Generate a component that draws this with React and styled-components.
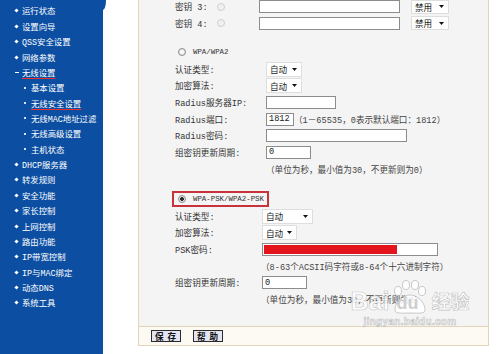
import React from 'react';
import styled, { createGlobalStyle } from 'styled-components';

const GlobalStyle = createGlobalStyle`
  html, body {
    margin: 0;
    padding: 0;
    background: #fff;
  }
  body {
    font-family: "Liberation Mono", "Noto Sans CJK SC", monospace;
    font-size: 8.6px;
    color: #333;
  }
`;

const Page = styled.div`
  position: relative;
  display: flex;
  width: 500px;
  height: 354px;
  overflow: hidden;
  background: #fff;
`;

const Sidebar = styled.nav`
  position: relative;
  flex: none;
  width: 103px;
  padding-top: 3.3px;
  box-sizing: border-box;
  background: #0b4ea2;
  &::after {
    content: '';
    position: absolute;
    left: 100%;
    top: 0;
    width: 3px;
    height: 10px;
    background: #0b4ea2;
    border-bottom-right-radius: 100% 100%;
  }
`;

const Menu = styled.ul`
  list-style: none;
  margin: 0;
  padding: 0;
`;

const MenuItem = styled.li`
  display: flex;
  align-items: center;
  height: 15.37px;
  padding-left: ${p => (p.$sub ? 24 : 15)}px;
  color: #fff;
  white-space: nowrap;
  font-family: "Noto Sans CJK SC", sans-serif;
  font-size: 8.4px;
`;

const Bullet = styled.span`
  flex: none;
  width: ${p => (p.$open ? 4 : p.$sub ? 2 : 3)}px;
  height: ${p => (p.$open ? 1.5 : p.$sub ? 2 : 3)}px;
  margin-right: ${p => (p.$open ? 3 : p.$sub ? 5 : 4)}px;
  background: ${p => (p.$sub ? '#d6e4ff' : '#fff')};
  transform: ${p => (p.$open || p.$sub ? 'none' : 'rotate(45deg)')};
`;

const MenuText = styled.span`
  font-family: "Liberation Mono", "Noto Sans CJK SC", sans-serif;
  text-decoration: ${p => (p.$active ? 'underline' : 'none')};
  text-decoration-color: #e8312f;
  text-decoration-thickness: 1px;
  text-underline-offset: 2px;
`;

const Gap = styled.div`
  flex: none;
  width: 35px;
`;

const Main = styled.div`
  flex: none;
  width: 351px;
  display: flex;
  flex-direction: column;
`;

const Panel = styled.div`
  height: 326px;
  box-sizing: border-box;
  overflow: hidden;
  padding-left: 36px;
  background: #f4f4f4;
  border-left: 1px solid #e3d6b8;
  border-right: 1px solid #e3d6b8;
`;

const Section = styled.div`
  display: flex;
  flex-direction: column;
  margin-top: ${p => p.$mt || 0}px;
`;

const Row = styled.div`
  display: flex;
  align-items: center;
  height: 16.67px;
  white-space: nowrap;
`;

const Label = styled.span`
  flex: none;
  width: ${p => p.$w}px;
  color: #333;
`;

const Note = styled.span`
  margin-left: ${p => p.$ml || 0}px;
  color: #444;
`;

const TextInput = styled.input`
  flex: none;
  width: ${p => p.$w}px;
  height: ${p => p.$h || 13}px;
  margin: 0;
  padding: 0 2px;
  box-sizing: border-box;
  border: 1px solid #8c8c8c;
  background: #fff;
  font: inherit;
  color: #222;
  outline: none;
`;

const SelectBox = styled.div`
  flex: none;
  display: flex;
  align-items: center;
  justify-content: space-between;
  width: ${p => p.$w}px;
  height: ${p => p.$h || 15}px;
  margin-left: ${p => p.$ml || 0}px;
  padding: 0 4px 0 3px;
  box-sizing: border-box;
  background: #fff;
  border: 1px solid #dedede;
  color: #222;
  font-family: "Noto Sans CJK SC", sans-serif;
`;

const Radio = styled.span`
  flex: none;
  width: 8px;
  height: 8px;
  margin-right: ${p => p.$mr || 0}px;
  box-sizing: border-box;
  border-radius: 50%;
  border: 1px solid ${p => (p.$disabled ? '#cfcfcf' : '#8e8e8e')};
  background: ${p =>
    p.$checked
      ? 'radial-gradient(circle, #2e2e2e 0 1.6px, #e9e9e9 2.2px)'
      : p.$disabled
      ? '#f0f0f0'
      : 'radial-gradient(circle, #fafafa 0 1.5px, #dcdcdc 3px)'};
`;

const ModeRow = styled(Row)`
  padding-left: 3px;
`;

const ModeFrame = styled.div`
  display: flex;
  align-items: center;
  width: 97px;
  height: 16px;
  margin-left: -6px;
  padding-left: 4px;
  box-sizing: border-box;
  border: 2px solid #c8323a;
`;

const ModeText = styled.span`
  font-family: "Liberation Mono", monospace;
  font-size: 7.4px;
  color: #333;
`;

const Masked = styled.div`
  height: 100%;
  width: 133px;
  background: #e3141c;
`;

const PskField = styled.div`
  flex: none;
  width: 176px;
  height: 13px;
  padding: 1px;
  box-sizing: border-box;
  border: 1px solid #8c8c8c;
  background: #fff;
`;

const ButtonBar = styled.div`
  display: flex;
  align-items: center;
  gap: 12px;
  height: 20px;
  padding-left: 12px;
  box-sizing: border-box;
  background: #fcfaf3;
  border: 1px solid #e3d6b8;
`;

const Button = styled.button`
  width: 30px;
  height: 12px;
  padding: 0;
  border: 1px solid #2b2b2b;
  background: #e4e4f2;
  color: #111;
  font-family: "Noto Sans CJK SC", sans-serif;
  font-size: 8.6px;
  font-weight: 700;
  line-height: 10px;
  letter-spacing: 1px;
`;

const Watermark = styled.div`
  position: absolute;
  left: 350px;
  top: 280px;
  width: 120px;
  display: flex;
  flex-direction: column;
  align-items: center;
  pointer-events: none;
  color: rgba(255, 255, 255, 0.85);
  -webkit-text-stroke: 0.6px rgba(140, 140, 140, 0.55);
`;

const MarkLine = styled.div`
  display: flex;
  align-items: flex-end;
  gap: 2px;
`;

const MarkLatin = styled.span`
  font-family: "Liberation Sans", sans-serif;
  font-weight: 700;
  font-size: 25px;
  line-height: 26px;
`;

const Paw = styled.span`
  position: relative;
  display: inline-block;
  width: 38px;
  height: 34px;
`;

const PawText = styled.span`
  position: absolute;
  left: 5px;
  bottom: 2px;
  font-family: "Liberation Sans", sans-serif;
  font-weight: 700;
  font-size: 18px;
  line-height: 18px;
  color: rgba(200, 200, 200, 0.9);
  -webkit-text-stroke: 0;
`;

const MarkCjk = styled.span`
  font-family: "Noto Sans CJK SC", sans-serif;
  font-weight: 700;
  font-size: 19px;
  line-height: 26px;
`;

const MarkUrl = styled.span`
  margin-top: 2px;
  font-family: "Liberation Sans", sans-serif;
  font-weight: 700;
  font-size: 10px;
  letter-spacing: 0.3px;
  color: rgba(255, 255, 255, 0.7);
`;

function Caret() {
  return (
    <svg width="5" height="3" viewBox="0 0 5 3">
      <polygon points="0,0 5,0 2.5,3" fill="#111" />
    </svg>
  );
}

function Dropdown({ value, ...rest }) {
  return (
    <SelectBox {...rest}>
      <span>{value}</span>
      <Caret />
    </SelectBox>
  );
}

const menu = [
  { text: '运行状态' },
  { text: '设置向导' },
  { text: 'QSS安全设置' },
  { text: '网络参数' },
  { text: '无线设置', open: true, active: true },
  { text: '基本设置', sub: true },
  { text: '无线安全设置', sub: true, active: true },
  { text: '无线MAC地址过滤', sub: true },
  { text: '无线高级设置', sub: true },
  { text: '主机状态', sub: true },
  { text: 'DHCP服务器' },
  { text: '转发规则' },
  { text: '安全功能' },
  { text: '家长控制' },
  { text: '上网控制' },
  { text: '路由功能' },
  { text: 'IP带宽控制' },
  { text: 'IP与MAC绑定' },
  { text: '动态DNS' },
  { text: '系统工具' },
];

export default function App() {
  return (
    <Page>
      <GlobalStyle />
      <Sidebar>
        <Menu>
          {menu.map(item => (
            <MenuItem key={item.text} $sub={item.sub}>
              <Bullet $sub={item.sub} $open={item.open} />
              <MenuText $active={item.active}>{item.text}</MenuText>
            </MenuItem>
          ))}
        </Menu>
      </Sidebar>
      <Gap />
      <Main>
        <Panel>
          <Section $mt={-1.5}>
            <Row>
              <Label $w={42}>密钥 3:</Label>
              <Radio $disabled $mr={34} />
              <TextInput $w={141} readOnly value="" />
              <Dropdown value="禁用" $w={38} $h={14} $ml={11} />
            </Row>
            <Row>
              <Label $w={42}>密钥 4:</Label>
              <Radio $disabled $mr={34} />
              <TextInput $w={141} readOnly value="" />
              <Dropdown value="禁用" $w={38} $h={14} $ml={11} />
            </Row>
          </Section>

          <Section $mt={12.3}>
            <ModeRow>
              <Radio $mr={7} />
              <ModeText>WPA/WPA2</ModeText>
            </ModeRow>
            <Row>
              <Label $w={91}>认证类型:</Label>
              <Dropdown value="自动" $w={36} />
            </Row>
            <Row>
              <Label $w={91}>加密算法:</Label>
              <Dropdown value="自动" $w={36} />
            </Row>
            <Row>
              <Label $w={91}>Radius服务器IP:</Label>
              <TextInput $w={70} readOnly value="" />
            </Row>
            <Row>
              <Label $w={91}>Radius端口:</Label>
              <TextInput $w={28} readOnly value="1812" />
              <Note>（1－65535，0表示默认端口：1812）</Note>
            </Row>
            <Row>
              <Label $w={91}>Radius密码:</Label>
              <TextInput $w={141} readOnly value="" />
            </Row>
            <Row>
              <Label $w={91}>组密钥更新周期:</Label>
              <TextInput $w={45} readOnly value="0" />
            </Row>
            <Row>
              <Note $ml={91}>（单位为秒，最小值为30，不更新则为0）</Note>
            </Row>
          </Section>

          <Section $mt={13.7}>
            <ModeRow>
              <ModeFrame>
                <Radio $checked $mr={7} />
                <ModeText>WPA-PSK/WPA2-PSK</ModeText>
              </ModeFrame>
            </ModeRow>
            <Row>
              <Label $w={87}>认证类型:</Label>
              <Dropdown value="自动" $w={51} />
            </Row>
            <Row>
              <Label $w={87}>加密算法:</Label>
              <Dropdown value="自动" $w={35} />
            </Row>
            <Row>
              <Label $w={87}>PSK密码:</Label>
              <PskField>
                <Masked />
              </PskField>
            </Row>
            <Row>
              <Note $ml={86}>（8-63个ACSII码字符或8-64个十六进制字符）</Note>
            </Row>
            <Row>
              <Label $w={87}>组密钥更新周期:</Label>
              <TextInput $w={45} readOnly value="0" />
            </Row>
            <Row>
              <Note $ml={86}>（单位为秒，最小值为30，不更新则为0）</Note>
            </Row>
          </Section>
        </Panel>
        <ButtonBar>
          <Button>保 存</Button>
          <Button>帮 助</Button>
        </ButtonBar>
      </Main>

      <Watermark>
        <MarkLine>
          <MarkLatin>Bai</MarkLatin>
          <Paw>
            <svg width="38" height="34" viewBox="0 0 38 34">
              <g fill="rgba(255,255,255,0.85)" stroke="rgba(140,140,140,0.55)" strokeWidth="0.8">
                <ellipse cx="7" cy="11" rx="3.5" ry="4.5" />
                <ellipse cx="15" cy="5" rx="3.5" ry="4.5" />
                <ellipse cx="24" cy="5" rx="3.5" ry="4.5" />
                <ellipse cx="31" cy="11" rx="3.5" ry="4.5" />
                <path d="M4 30 C4 22 12 15 19 15 C26 15 34 22 34 30 C34 34 28 33 19 33 C10 33 4 34 4 30 Z" />
              </g>
            </svg>
            <PawText>du</PawText>
          </Paw>
          <MarkCjk>经验</MarkCjk>
        </MarkLine>
        <MarkUrl>jingyan.baidu.com</MarkUrl>
      </Watermark>
    </Page>
  );
}
